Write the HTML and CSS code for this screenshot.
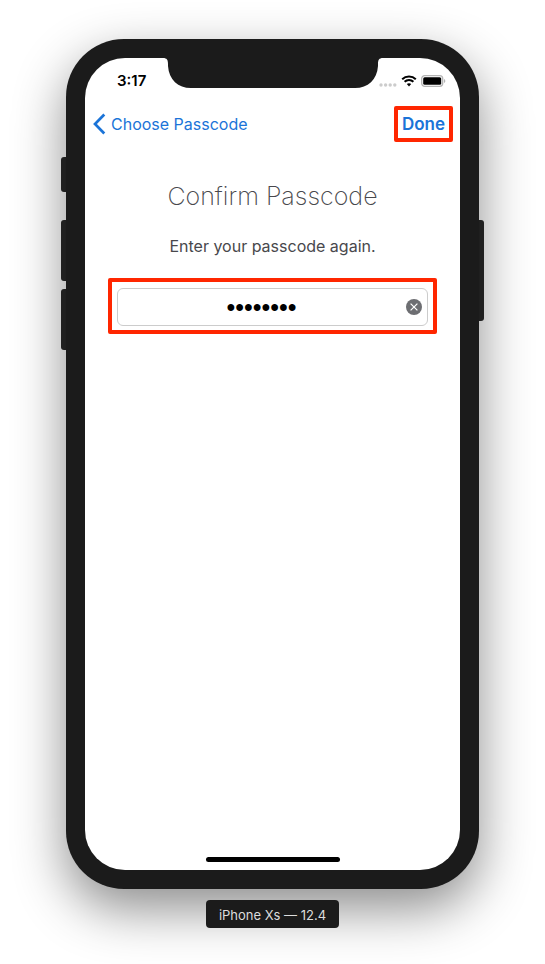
FILE: index.html
```html
<!DOCTYPE html>
<html lang="en">
<head>
<meta charset="utf-8">
<meta name="viewport" content="width=device-width, initial-scale=1">
<title>Confirm Passcode</title>
<link rel="stylesheet" href="styles.css">
</head>
<body>
<main class="stage">
  <div class="phone">
    <span class="key key-mute"></span>
    <span class="key key-up"></span>
    <span class="key key-down"></span>
    <span class="key key-power"></span>
    <div class="screen">
      <svg class="notch" viewBox="0 0 220 31" aria-hidden="true">
        <path d="M0 0C4 0 5 2 5 6V8C6 22 15 30 28 30H192C205 30 214 22 215 8V6C215 2 216 0 220 0Z" fill="#1b1b1b"/>
      </svg>
      <div class="status">
        <span class="time">3:17</span>
        <span class="indicators">
          <svg class="signal" viewBox="0 0 18 4" aria-hidden="true" fill="#ccc">
            <circle cx="2" cy="2" r="1.7"/><circle cx="6.6" cy="2" r="1.7"/><circle cx="11.2" cy="2" r="1.7"/><circle cx="15.8" cy="2" r="1.7"/>
          </svg>
          <svg class="wifi" viewBox="0 0 16 12" aria-hidden="true">
            <path d="M1.2 4.3A9.7 9.7 0 0 1 14.8 4.3M3.6 6.8A6.2 6.2 0 0 1 12.4 6.8" fill="none" stroke="#000" stroke-width="2"/>
            <path d="M5.8 9.1A3.4 3.4 0 0 1 10.2 9.1L8 11.4Z" fill="#000"/>
          </svg>
          <svg class="battery" viewBox="0 0 25 12" aria-hidden="true">
            <rect x=".7" y=".7" width="21" height="10.6" rx="3" fill="#fff" stroke="#b4b4b4" stroke-width="1.3"/>
            <rect x="2.2" y="2.2" width="18" height="7.6" rx="1.5" fill="#000"/>
            <path d="M23 4V8C24.8 7.4 24.8 4.6 23 4Z" fill="#b4b4b4"/>
          </svg>
        </span>
      </div>
      <nav class="navbar">
        <a class="back" href="#choose">
          <svg class="chevron" viewBox="0 0 13 22" aria-hidden="true"><path d="M11.3 1.5L2 11L11.3 20.5" fill="none" stroke="#1b74d8" stroke-width="2.7"/></svg>
          Choose Passcode
        </a>
        <button class="done mark" type="submit" form="passcode-form">Done</button>
      </nav>
      <form class="content" id="passcode-form">
        <h1 class="title">Confirm Passcode</h1>
        <label class="prompt" for="passcode">Enter your passcode again.</label>
        <div class="field-frame mark">
          <div class="field">
            <input class="entry" id="passcode" type="password" value="12345678">
            <button class="clear" type="reset" aria-label="Clear">
              <svg viewBox="0 0 16 16" aria-hidden="true"><circle cx="8" cy="8" r="8" fill="#6d6e72"/><path d="M4.6 4.6L11.4 11.4M11.4 4.6L4.6 11.4" stroke="#fff" stroke-width="1.2"/></svg>
            </button>
          </div>
        </div>
      </form>
      <div class="home"></div>
    </div>
  </div>
  <p class="device">iPhone Xs — 12.4</p>
</main>
</body>
</html>
```

FILE: styles.css
```css
* {
  box-sizing: border-box;
}

body {
  margin: 0;
  background: #fff;
  font-family: Inter, "Liberation Sans", sans-serif;
  color: #000;
}

.stage {
  display: flex;
  flex-direction: column;
  align-items: center;
  min-height: 100vh;
  padding: 39px 66px 36px;
  overflow: hidden;
}

.phone {
  position: relative;
  display: flex;
  flex: 1;
  width: 100%;
  max-width: 480px;
  padding: 19px;
  border-radius: 58px;
  background: #1b1b1b;
  box-shadow: 0 20px 52px rgba(0, 0, 0, 0.45);
}

.key {
  position: absolute;
  left: -5px;
  width: 8px;
  border-radius: 3px;
  background: #292929;
  z-index: -1;
}

.key-mute {
  top: 118px;
  height: 35px;
}

.key-up {
  top: 181px;
  height: 61px;
}

.key-down {
  top: 250px;
  height: 61px;
}

.key-power {
  left: auto;
  right: -5px;
  top: 181px;
  height: 101px;
}

.screen {
  position: relative;
  display: flex;
  flex: 1;
  flex-direction: column;
  min-width: 0;
  border-radius: 40px;
  background: #fff;
}

.notch {
  position: absolute;
  top: 0;
  left: 50%;
  width: 220px;
  height: 31px;
  transform: translateX(-50%);
}

.status {
  display: flex;
  align-items: center;
  justify-content: space-between;
  height: 44px;
  padding: 2px 14px 0 32px;
}

.time {
  font-size: 15px;
  font-weight: 600;
  line-height: 20px;
}

.indicators {
  display: flex;
  align-items: center;
  gap: 4px;
}

.signal {
  width: 18px;
  height: 4px;
  margin-top: 8px;
}

.wifi {
  width: 16px;
  height: 12px;
}

.battery {
  width: 25px;
  height: 12px;
}

.navbar {
  display: flex;
  align-items: center;
  justify-content: space-between;
  height: 44px;
  padding: 0 7px 0 8px;
}

.back {
  display: flex;
  align-items: center;
  gap: 5px;
  color: #1b74d8;
  font-size: 16px;
  line-height: 22px;
  text-decoration: none;
}

.chevron {
  width: 13px;
  height: 22px;
}

.mark {
  border: 4px solid #ff2600;
  border-radius: 2px;
}

.done {
  height: 36px;
  padding: 0 4px;
  background: none;
  color: #1b74d8;
  font-family: inherit;
  font-size: 17px;
  font-weight: 600;
}

.content {
  display: flex;
  flex: 1;
  flex-direction: column;
  align-items: center;
  padding: 32px 23px 0;
}

.title {
  margin: 0;
  color: #48484c;
  font-size: 25px;
  font-weight: 200;
  line-height: 36px;
}

.prompt {
  margin-top: 20px;
  color: #48484c;
  font-size: 16px;
  line-height: 24px;
}

.field-frame {
  width: 100%;
  margin-top: 20px;
  padding: 6px 5px 4px;
}

.field {
  display: flex;
  align-items: center;
  gap: 6px;
  height: 38px;
  padding: 0 5px;
  border: 1px solid #ccc;
  border-radius: 6px;
}

.entry {
  flex: 1;
  min-width: 0;
  height: 32px;
  padding: 0;
  border: 0;
  outline: 0;
  background: none;
  font-family: "Liberation Sans", sans-serif;
  font-size: 25px;
  text-align: center;
}

.clear {
  width: 16px;
  height: 16px;
  padding: 0;
  border: 0;
  background: none;
}

.clear svg {
  display: block;
}

.home {
  align-self: center;
  width: 134px;
  height: 5px;
  margin-bottom: 8px;
  border-radius: 3px;
  background: #000;
}

.device {
  position: relative;
  margin: 11px 0 0;
  padding: 5px 13px 3px;
  border-radius: 4px;
  background: #1b1b1b;
  color: #ddd;
  font-size: 13px;
  line-height: 20px;
}
```
